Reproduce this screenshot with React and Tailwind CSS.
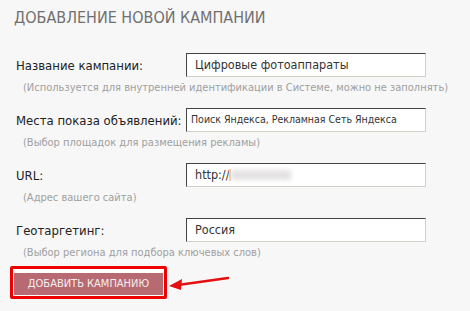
import React from "react";

const FIELDS = [
  { label: "Название кампании:", value: "Цифровые фотоаппараты", hint: "(Используется для внутренней идентификации в Системе, можно не заполнять)", small: false },
  { label: "Места показа объявлений:", value: "Поиск Яндекса, Рекламная Сеть Яндекса", hint: "(Выбор площадок для размещения рекламы)", small: true },
  { label: "URL:", value: "http://", hint: "(Адрес вашего сайта)", small: false, blur: true },
  { label: "Геотаргетинг:", value: "Россия", hint: "(Выбор региона для подбора ключевых слов)", small: false },
];

const Field = ({ label, value, hint, small, blur }) => (
  <div className="h-[55px]">
    <div className="flex items-start">
      <label className="w-[186px] pl-[16px] pt-[5px] text-[13px] leading-[16px] text-[#222] whitespace-nowrap">{label}</label>
      <div className="w-[240px] h-[24px] bg-white border-t border-l border-t-[#444] border-l-[#444] border-b border-r border-b-[#d4d0c8] border-r-[#d4d0c8] flex items-center whitespace-nowrap">
        <span className={small ? "pl-[4px] text-[10.5px] text-[#333]" : "pl-[8px] text-[12.5px] text-[#333]"}>
          {value}
        </span>
        {blur && (
          <span className="flex items-center">
            <span className="w-[2px] h-[12px] bg-[#f0c9a0]" />
            <span className="w-[60px] h-[10px] bg-[#e4e2e2] blur-[2px]" />
          </span>
        )}
      </div>
    </div>
    <div className="pl-[23px] mt-[4px] text-[11px] leading-[13px] text-[#a0a0a0] whitespace-nowrap">{hint}</div>
  </div>
);

export default function App() {
  return (
    <div className="w-[470px] h-[311px] bg-[#f7f7f7] font-['DejaVu_Sans_Condensed','DejaVu_Sans',sans-serif] overflow-hidden">
      <h1 className="pl-[14px] pt-[7px] text-[16px] leading-[22px] text-[#707070] whitespace-nowrap">ДОБАВЛЕНИЕ НОВОЙ КАМПАНИИ</h1>
      <div className="mt-[24px]">
        {FIELDS.map((f) => (
          <Field key={f.label} {...f} />
        ))}
      </div>
      <div className="flex items-center pl-[10px] mt-[-7px]">
        <div className="border-[3px] border-[#ee0000] rounded-[2px] p-[1px] bg-white">
          <button className="w-[149px] h-[22px] bg-[#b86a72] text-[#f4eeee] text-[11px] leading-[22px] text-center whitespace-nowrap">
            ДОБАВИТЬ КАМПАНИЮ
          </button>
        </div>
        <svg width="62" height="16" viewBox="0 0 62 16" className="ml-[1px]">
          <path d="M10 10 L60 3" stroke="#e41010" strokeWidth="2.5" strokeLinecap="round" />
          <path d="M1 11 L14 4 L13 15 Z" fill="#e41010" />
        </svg>
      </div>
    </div>
  );
}
